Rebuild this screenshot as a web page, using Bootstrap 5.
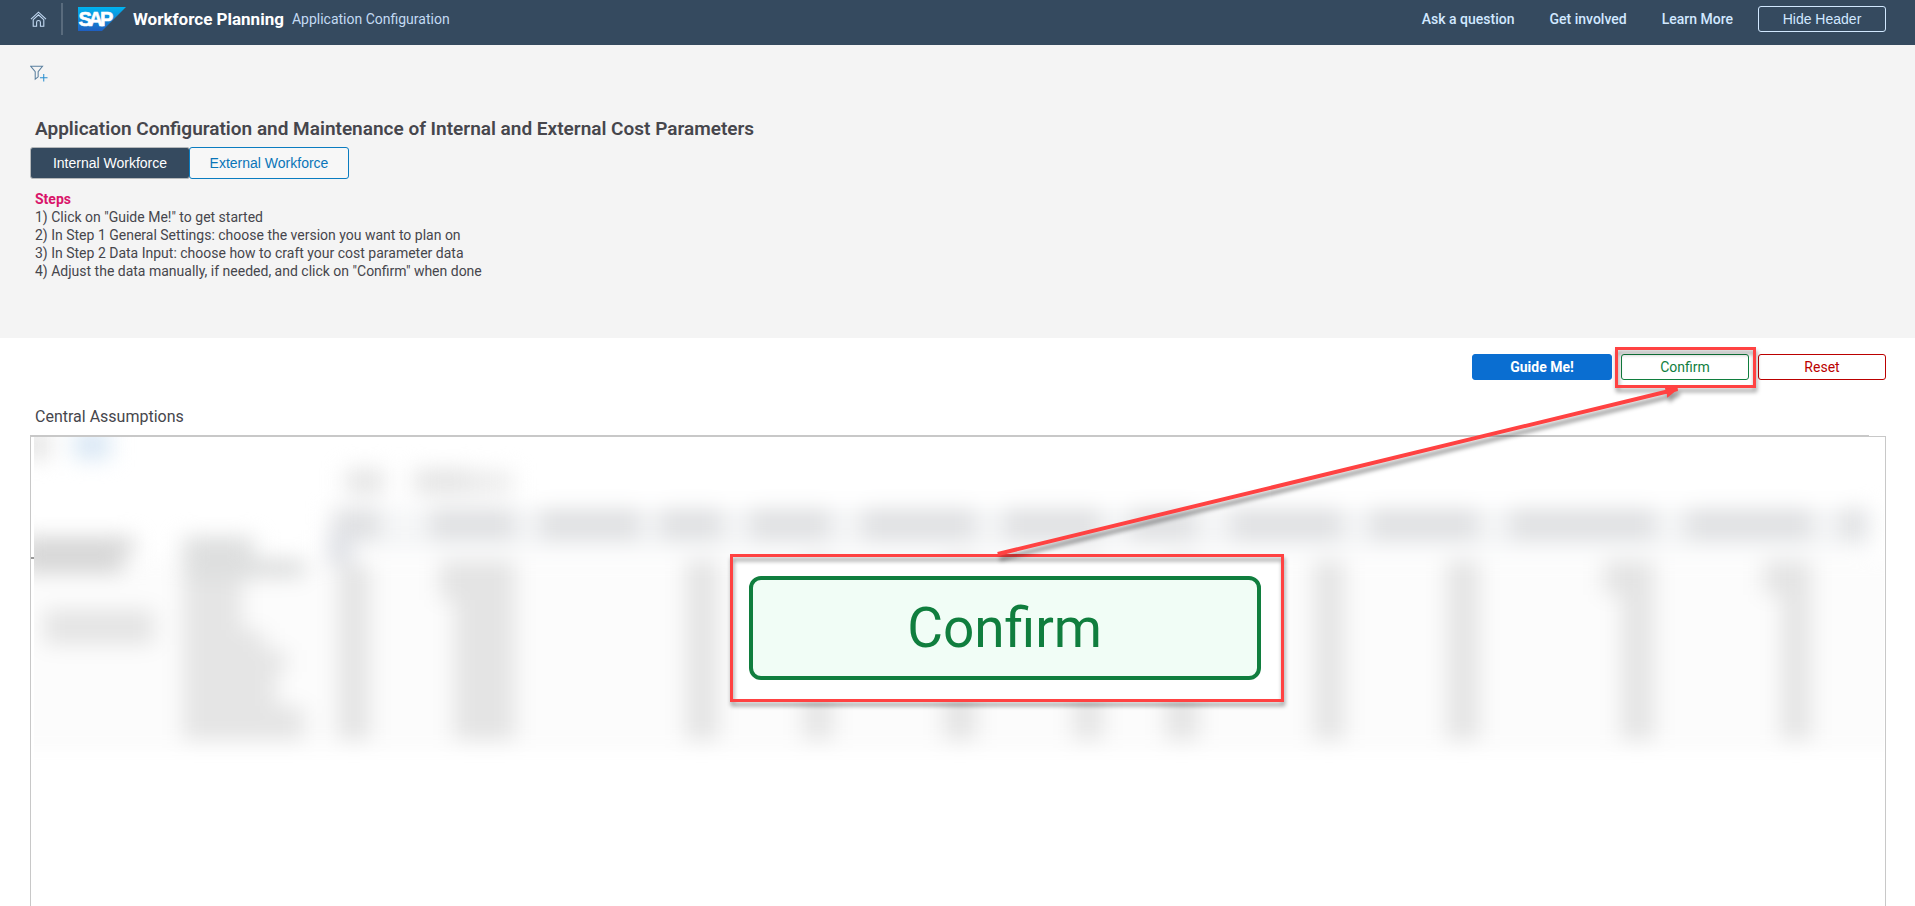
<!DOCTYPE html>
<html lang="en">
<head>
<meta charset="utf-8">
<meta name="viewport" content="width=device-width, initial-scale=1">
<title>Workforce Planning - Application Configuration</title>
<link href="https://cdn.jsdelivr.net/npm/bootstrap@5.3.0/dist/css/bootstrap.min.css" rel="stylesheet">
<style>
  body { font-family: Roboto, "Liberation Sans", sans-serif; font-size: 14px; line-height: 18px; color: #46464c; background: #fff; }
  .shell-bar { background: #354a5f; height: 45px; padding: 0 29px 0 30px; }
  .shell-bar a { color: #d1e8ff; font-weight: 500; text-decoration: none; }
  .shell-inner { height: 38px; }
  .shell-rule { width: 2px; height: 32px; background: #596b7d; margin: 0 15px 0 14px; }
  .shell-title { font-size: 17px; font-weight: 700; color: #fff; margin: 0 8px 0 7px; }
  .shell-sub { color: #c3daf3; }
  .shell-links { gap: 35px; margin-right: 25px; }
  .btn-app { height: 26px; padding: 0; width: 128px; font-size: 14px; line-height: 18px; border-radius: 3px; background: #fff; }
  .btn-arial { font-family: "Liberation Sans", Arial, sans-serif; }
  .btn-shell, .btn-shell:hover { color: #d1e8ff; border-color: #d1e8ff; background: transparent; }
  .btn-guide, .btn-guide:hover { width: 140px; background: #0a6ed1; border-color: #0a6ed1; color: #fff; font-weight: 700; }
  .btn-ok, .btn-ok:hover { color: #107e3e; border-color: #107e3e; }
  .btn-clear, .btn-clear:hover { color: #b00; border-color: #b00; }
  .intro { background: #f4f4f4; padding: 20px 30px 58px; }
  .filter-btn { width: 18px; height: 18px; }
  .intro-title { font-size: 19px; line-height: 24px; font-weight: 600; margin: 34px 5px 6px; }
  .tab-btn { width: 160px; height: 32px; padding: 0; font-size: 14px; line-height: 18px; border-radius: 3px; font-family: "Liberation Sans", Arial, sans-serif; }
  .tab-btn + .tab-btn { margin-left: -1px; }
  .tab-on, .tab-on:hover { background: #354a5f; border-color: #b5b8ba; color: #fff; }
  .tab-off, .tab-off:hover { background: #f7f7f7; border-color: #0a7cc0; color: #0a75b8; }
  .steps { margin: 11px 5px 0; }
  .steps-head { color: #d9146a; font-weight: 700; font-size: 14px; line-height: 18px; }
  .stage { padding: 16px 29px 0 30px; }
  .actions { gap: 9px; }
  .section-title { font-size: 16px; line-height: 20px; font-weight: 400; margin: 27px 5px 8px; }
  .grid-line { height: 1px; background: #c8c8c8; margin-right: 17px; }
  .grid-frame { border: 1px solid #c8c8c8; border-bottom: 0; height: 470px; padding: 0 1px 0 3px; }
  .grid-tick { top: 120px; left: 0; width: 3px; height: 2px; background: #999; }
  .mark-box { border: 3px solid #ff4242; filter: drop-shadow(1px 4px 2px rgba(0,0,0,.4)); }
  .mark-small { inset: -7px -7px -8px -6px; }
  .callout { left: 38.1%; top: 216px; width: 554px; height: 148px; background: #fff; padding: 22px 23px 22px 19px; }
  .callout-frame { inset: 0; }
  .btn-big, .btn-big:hover { border: 4px solid #107e3e; border-radius: 12px; background: #f1fdf6; color: #107e3e; font-size: 55px; line-height: 64px; }
  .arrow { inset: 0; pointer-events: none; filter: drop-shadow(2px 5px 2px rgba(0,0,0,.4)); }
</style>
</head>
<body class="overflow-hidden">
<header class="shell-bar">
  <div class="shell-inner d-flex align-items-center">
    <a href="#" aria-label="Home" class="d-flex"><svg width="17" height="17" viewBox="0 0 17 17" fill="none" stroke="#c3daf3" stroke-width="1.1"><path d="M1 8.200 8.500 1.200 16 8.200M3 8.800 8.500 3.800 14 8.800M3.200 8.500V15.300H6.600V11.200Q6.600 9.500 8.500 9.500T10.400 11.200V15.300H13.800V8.500"/></svg></a>
    <div class="shell-rule"></div>
    <svg width="48" height="24" viewBox="0 0 48 24" role="img" aria-label="SAP">
      <defs><linearGradient id="sapBlue" x1="0" y1="0" x2="0" y2="1"><stop offset="0" stop-color="#00b4f0"/><stop offset="1" stop-color="#1f5fc0"/></linearGradient></defs>
      <path d="M0 0H48L24 24H0Z" fill="url(#sapBlue)"/>
      <text y="19" font-family="Liberation Sans" font-weight="700" font-size="20" fill="#fff" stroke="#fff" stroke-width=".6"><tspan x="0.500">S</tspan><tspan x="10.500">A</tspan><tspan x="22">P</tspan></text>
    </svg>
    <span class="shell-title">Workforce Planning</span>
    <span class="shell-sub">Application Configuration</span>
    <nav class="shell-links d-flex ms-auto">
      <a href="#">Ask a question</a>
      <a href="#">Get involved</a>
      <a href="#">Learn More</a>
    </nav>
    <button type="button" class="btn btn-app btn-arial btn-shell">Hide Header</button>
  </div>
</header>

<section class="intro">
  <button type="button" class="filter-btn btn p-0 border-0 d-flex" aria-label="Add filter"><svg width="19" height="18" viewBox="0 0 19 18" fill="none"><path d="M.8.8H13.200L8.600 6.500V12L5.500 14.500V6.500Z" stroke="#5a7f9e" stroke-width="1.100"/><path d="M14.500 9V17M10.500 13H18.500" stroke="#2a8fcf" stroke-width="1.100"/></svg></button>
  <h1 class="intro-title">Application Configuration and Maintenance of Internal and External Cost Parameters</h1>
  <div class="d-flex">
    <button type="button" class="btn tab-btn tab-on">Internal Workforce</button>
    <button type="button" class="btn tab-btn tab-off">External Workforce</button>
  </div>
  <div class="steps">
    <h2 class="steps-head mb-0">Steps</h2>
    <div>1) Click on "Guide Me!" to get started</div>
    <div>2) In Step 1 General Settings: choose the version you want to plan on</div>
    <div>3) In Step 2 Data Input: choose how to craft your cost parameter data</div>
    <div>4) Adjust the data manually, if needed, and click on "Confirm" when done</div>
  </div>
</section>

<main class="stage position-relative">
  <div class="actions d-flex justify-content-end">
    <button type="button" class="btn btn-app btn-guide">Guide Me!</button>
    <div class="position-relative d-flex">
      <button type="button" class="btn btn-app btn-ok">Confirm</button>
      <div class="mark-box mark-small position-absolute"></div>
    </div>
    <button type="button" class="btn btn-app btn-clear">Reset</button>
  </div>
  <h2 class="section-title">Central Assumptions</h2>
  <div class="grid-line"></div>
  <div class="grid-frame position-relative">
    <div class="grid-tick position-absolute"></div>
    <svg class="d-block w-100" height="330" viewBox="34 437 1850 330" preserveAspectRatio="none" aria-hidden="true">
      <defs><filter id="soft" x="-5%" y="-10%" width="110%" height="120%" color-interpolation-filters="sRGB"><feGaussianBlur stdDeviation="11 10"/></filter></defs>
      <g filter="url(#soft)">
        <path fill="#fcfcfc" d="M0 560H1920V752H0Z"/>
        <path fill="#f5f6f7" d="M330 508H1872V550H330Z"/>
        <path fill="#e6e6e6" d="M20 430H50V460H20Z"/>
        <path fill="#dae8f5" d="M74 430H110V460H74Z"/>
        <path fill="#e6e6e6" d="M346 468H384V495H346ZM414 468H470V495H414Z"/>
        <path fill="#ededed" d="M470 470H512V495H470Z"/>
        <path fill="#e0e1e3" d="M334 508H380V540H334ZM430 508H515V540H430ZM540 508H640V540H540ZM660 508H722V540H660ZM750 508H830V540H750ZM862 508H975V540H862ZM1004 508H1100V540H1004ZM1130 508H1196V540H1130ZM1231 508H1342V540H1231ZM1370 508H1478V540H1370ZM1510 508H1655V540H1510ZM1686 508H1812V540H1686ZM1840 508H1866V540H1840Z"/>
        <path fill="#d8d8d8" d="M20 536H134V553H124V574H20Z"/>
        <path fill="#e5e5e5" d="M44 609H154V645H44Z"/>
        <path fill="#dedfdf" d="M183 536H254V558H304V578H254V580H183Z"/>
        <path fill="#e5e5e5" d="M183 580H242V630H264V650H286V672H276V706H304V740H183Z"/>
        <path fill="#dee0e5" d="M328 530H352V565H328Z"/>
        <path fill="#e4e4e4" d="M338 565H370V740H338ZM440 560H515V740H454V600H440ZM686 560H718V740H686ZM804 560H832V740H804ZM944 560H976V740H944ZM1074 560H1102V740H1074ZM1166 560H1198V740H1166ZM1314 560H1344V740H1314ZM1447 560H1479V740H1447ZM1604 560H1654V740H1621V595H1604ZM1764 560H1811V740H1781V595H1764Z"/>
      </g>
    </svg>
  </div>
  <div class="callout position-absolute">
    <div class="mark-box callout-frame position-absolute"></div>
    <button type="button" class="btn btn-big w-100 h-100 p-0 position-relative">Confirm</button>
  </div>
  <svg class="arrow position-absolute w-100 h-100" aria-hidden="true">
    <defs><marker id="tip" viewBox="0 0 13 12" refX="12" refY="6" markerWidth="13" markerHeight="12" markerUnits="userSpaceOnUse" orient="auto"><path d="M0 0 13 6 0 12Z" fill="#ff4242"/></marker></defs>
    <line x1="52.100%" y1="216" x2="87.600%" y2="51" stroke="#ff4242" stroke-width="4" marker-end="url(#tip)"/>
  </svg>
</main>
<script src="https://cdn.jsdelivr.net/npm/bootstrap@5.3.0/dist/js/bootstrap.bundle.min.js"></script>
</body>
</html>
